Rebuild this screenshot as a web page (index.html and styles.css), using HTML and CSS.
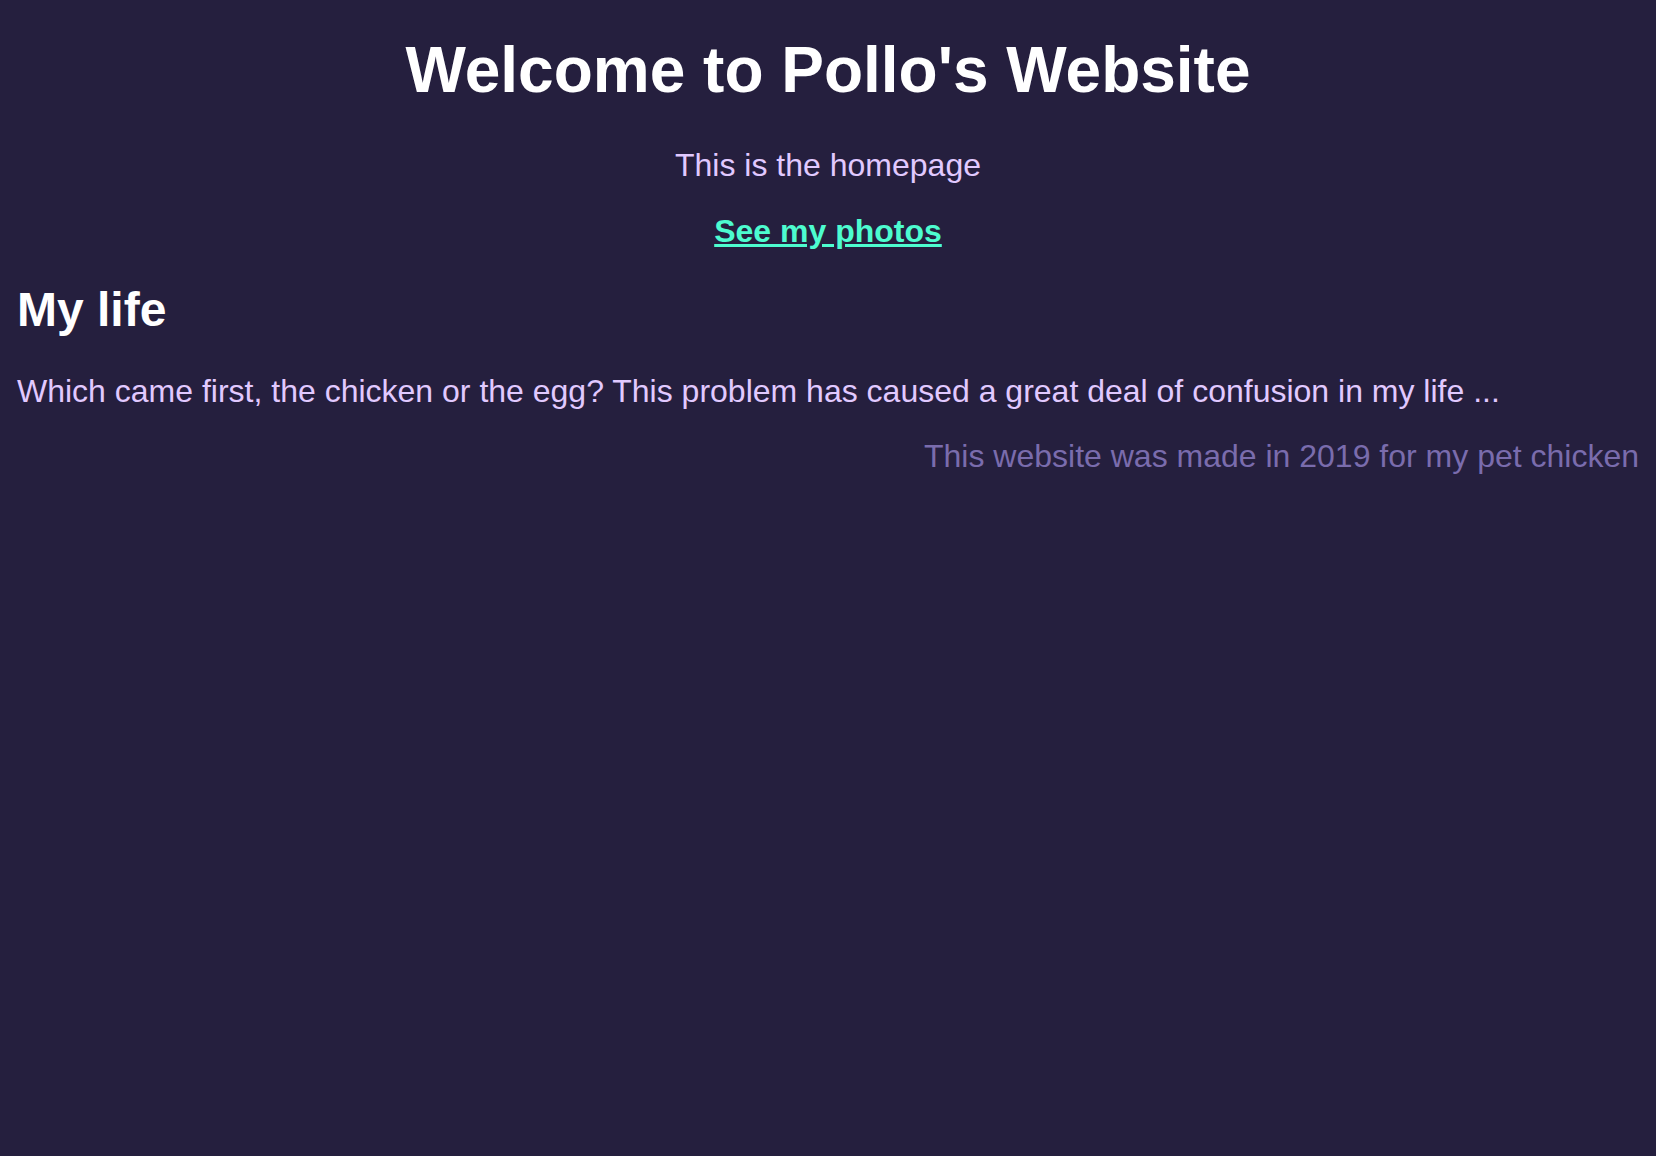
FILE: index.html
```html
<!DOCTYPE html>
<html>
<head>
<meta charset="utf-8">
<title>Pollo's Website</title>
<link rel="stylesheet" href="styles.css">
</head>
<body>
<header class="hero">
  <h1 class="title">Welcome to Pollo's Website</h1>
  <p class="subtitle">This is the homepage</p>
  <p class="nav"><a class="photos-link" href="#">See my photos</a></p>
</header>
<main class="content">
  <h2 class="section-title">My life</h2>
  <p class="text">Which came first, the chicken or the egg? This problem has caused a great deal of confusion in my life ...</p>
</main>
<footer class="footer">This website was made in 2019 for my pet chicken</footer>
</body>
</html>
```
FILE: styles.css
```css
html, body {
  background: #251f3e;
}
body {
  margin: 0;
  padding: 16px 17px;
  font-family: "Liberation Sans", Arial, sans-serif;
  color: #e1c9ff;
  font-size: 32px;
}
.hero {
  text-align: center;
}
.title {
  color: #ffffff;
  font-size: 64px;
  font-weight: bold;
  margin: 17px 0 40px;
}
.subtitle {
  margin: 0 0 29px;
}
.nav {
  margin: 0;
  font-weight: bold;
}
.photos-link {
  color: #4dfccf;
}
.section-title {
  color: #ffffff;
  font-size: 48px;
  margin: 32px 0 36px;
}
.text {
  margin: 0;
}
.footer {
  text-align: right;
  color: #7a6cad;
  margin-top: 28px;
}
```
